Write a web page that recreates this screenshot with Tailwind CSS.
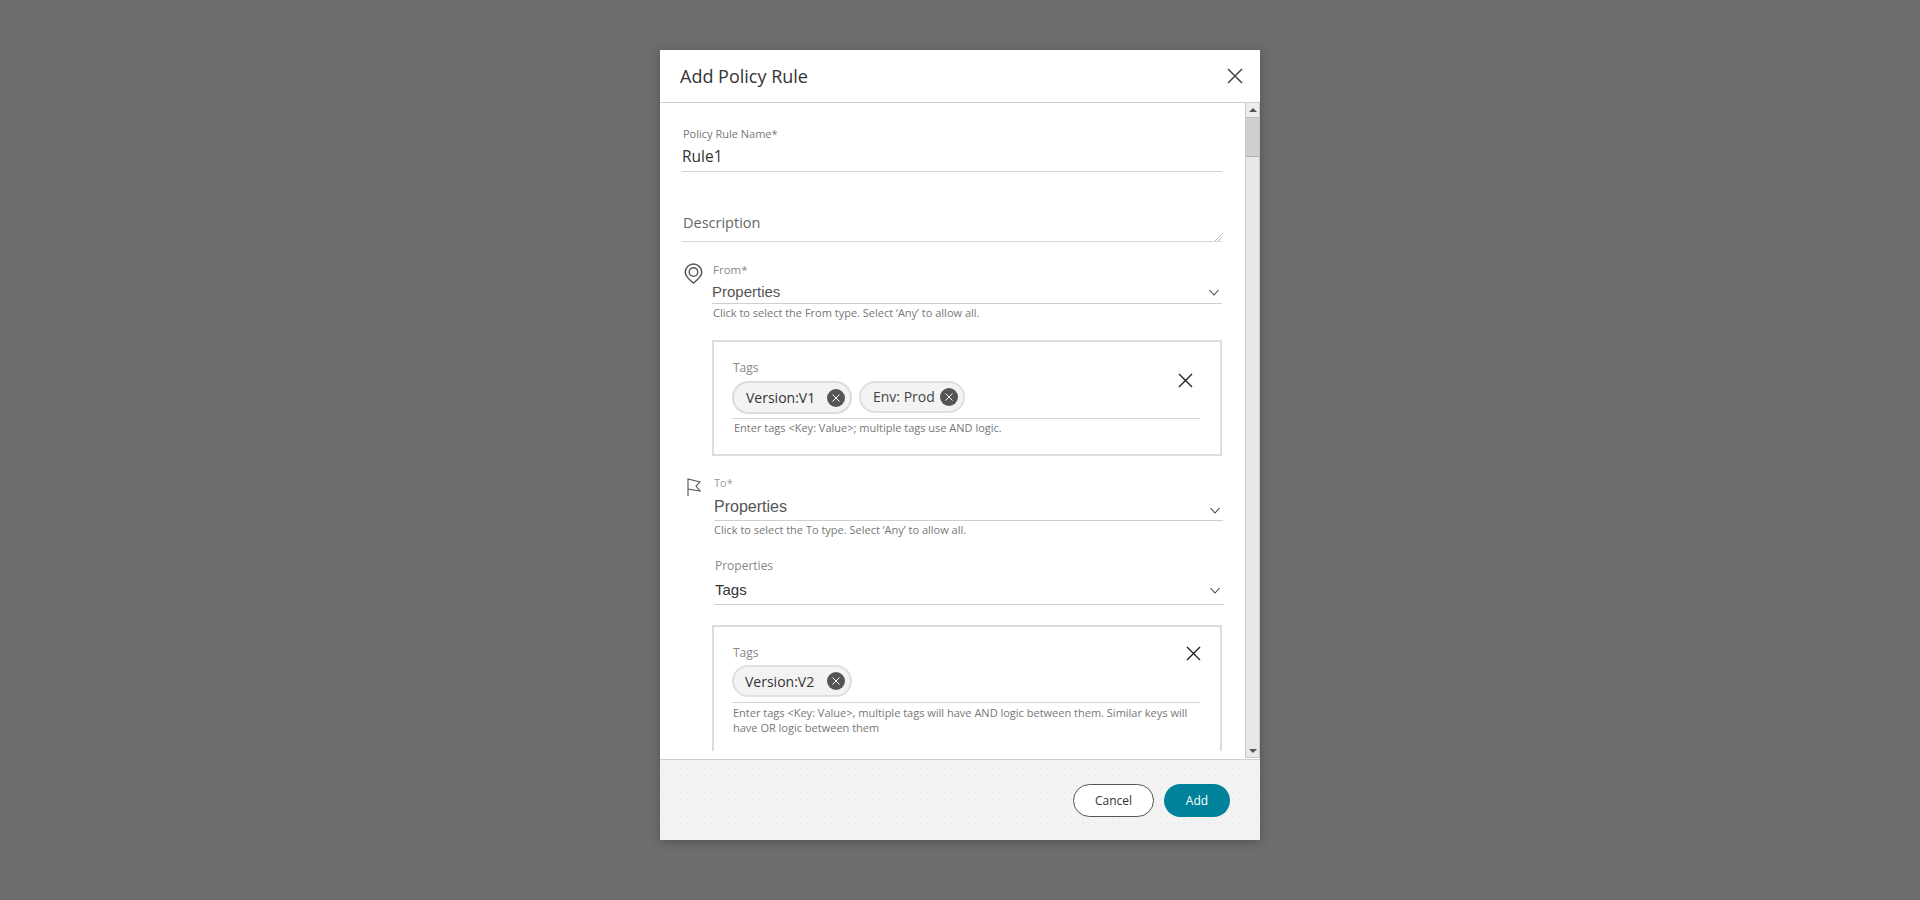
<!DOCTYPE html>
<html lang="en">
<head>
  <meta charset="UTF-8" />
  <title>Add Policy Rule</title>
  <script src="https://cdn.jsdelivr.net/npm/@tailwindcss/browser@4"></script>
</head>
<body class="bg-[#6d6d6d] h-[900px] overflow-hidden font-['Open_Sans',sans-serif]">
  <div class="flex justify-center pt-[50px]">
    <div class="w-[600px] h-[790px] flex flex-col bg-white shadow-[0_2px_10px_rgba(0,0,0,0.25)]">

      <!-- header -->
      <div class="h-[53px] shrink-0 flex items-center justify-between pl-[20px] pr-[17px] border-b border-[#cfcfcf]">
        <h1 class="text-[18px] leading-6 text-[#333]">Add Policy Rule</h1>
        <svg class="w-4 h-4 text-[#444]" viewBox="0 0 16 16" fill="none" stroke="currentColor" stroke-width="1.5"><path d="M1 1l14 14M15 1L1 15"/></svg>
      </div>

      <div class="flex h-[656px] shrink-0">
        <!-- form -->
        <div class="w-[585px] h-[648px] overflow-hidden pl-[22px]">
          <div class="w-[540px] pt-[23px]">
            <div class="pl-[1px] text-[11px] leading-4 text-[#777]">Policy Rule Name*</div>
            <div class="mt-[4px] h-[26px] border-b border-[#d0d0d0] text-[15.5px] leading-5 text-[#333]">Rule1</div>

            <div class="relative mt-[41px] h-[29px] pl-[1px] border-b border-[#d8d8d8] text-[14.5px] leading-5 text-[#666]">
              Description
              <svg class="absolute right-0 bottom-0 w-2 h-2 text-[#bbb]" viewBox="0 0 8 8" fill="none" stroke="currentColor"><path d="M1 8l7-7M4 8l4-4"/></svg>
            </div>

            <!-- from -->
            <div class="flex mt-[20px]">
              <div class="w-[30px] shrink-0 pl-[2px] pt-[1px]">
                <svg class="w-[19px] h-[21px] text-[#555]" viewBox="0 0 20 22" fill="none" stroke="currentColor" stroke-width="1.5"><path d="M10 1a8.700 8.700 0 0 0-8.700 8.700c0 4.700 5 8.400 8.700 11.400 3.700-3 8.700-6.700 8.700-11.400A8.700 8.700 0 0 0 10 1z"/><circle cx="10" cy="9.500" r="4.500"/></svg>
              </div>
              <div class="w-[510px]">
                <div class="pl-[1px] text-[11.5px] leading-4 text-[#888]">From*</div>
                <div class="mt-[4px] h-[22px] flex justify-between border-b border-[#cfcfcf] pr-[3px] font-['Liberation_Sans',sans-serif] text-[15px] leading-5 text-[#555]">
                  Properties
                  <svg class="w-[10px] h-[20px] text-[#444]" viewBox="0 0 10 20" fill="none" stroke="currentColor" stroke-width="1.100"><path d="M0.500 8l4.500 5 4.500-5"/></svg>
                </div>
                <div class="mt-[1px] pl-[1px] text-[11px] leading-4 text-[#777]">Click to select the From type. Select ‘Any’ to allow all.</div>

                <div class="relative mt-[19px] h-[116px] border-2 border-[#dcdcdc] pt-[18px] pl-[18px] pr-[20px]">
                  <div class="pl-[1px] text-[12px] leading-4 text-[#888]">Tags</div>
                  <div class="mt-[5px] h-[38px] flex items-start gap-[7px] border-b border-[#d5d5d5]">
                    <div class="w-[120px] h-[33px] flex items-center justify-between rounded-full border-2 border-[#dcdcdc] bg-[#f3f3f3] pl-[12px] pr-[5px] text-[14px] text-[#333]">
                      Version:V1
                      <svg class="w-[18px] h-[18px]" viewBox="0 0 18 18"><circle cx="9" cy="9" r="9" fill="#555"/><path d="M5.500 5.500l7 7M12.500 5.500l-7 7" stroke="#fff" stroke-width="1"/></svg>
                    </div>
                    <div class="w-[106px] h-[32px] flex items-center justify-between rounded-full border-2 border-[#e0e0e0] bg-[#f3f3f3] pl-[12px] pr-[5px] text-[14px] text-[#444]">
                      <span class="-mt-[1px]">Env: Prod</span>
                      <svg class="w-[18px] h-[18px]" viewBox="0 0 18 18"><circle cx="9" cy="9" r="9" fill="#555"/><path d="M5.500 5.500l7 7M12.500 5.500l-7 7" stroke="#fff" stroke-width="1"/></svg>
                    </div>
                  </div>
                  <div class="mt-[1px] pl-[2px] text-[11px] leading-4 text-[#777]">Enter tags &lt;Key: Value&gt;; multiple tags use AND logic.</div>
                  <svg class="absolute left-[464px] top-[31px] w-[15px] h-[15px] text-[#222]" viewBox="0 0 15 15" fill="none" stroke="currentColor" stroke-width="1.400"><path d="M1 1l13 13M14 1L1 14"/></svg>
                </div>
              </div>
            </div>

            <!-- to -->
            <div class="flex mt-[19px]">
              <div class="w-[32px] shrink-0 pl-[5px] pt-[3px]">
                <svg class="w-[14px] h-[18px] text-[#555]" viewBox="0 0 14 18" fill="none" stroke="currentColor" stroke-width="1.100"><path d="M1 18V1l12 3-4 4 4 5-12-2"/></svg>
              </div>
              <div class="w-[509px] shrink-0">
                <div class="text-[11px] leading-4 text-[#999]">To*</div>
                <div class="mt-[4px] h-[26px] flex justify-between border-b border-[#cfcfcf] pr-[3px] pt-[1px] font-['Liberation_Sans',sans-serif] text-[16px] leading-[22px] text-[#555]">
                  Properties
                  <svg class="w-[10px] h-[24px] text-[#444]" viewBox="0 0 10 24" fill="none" stroke="currentColor" stroke-width="1.100"><path d="M0.500 12l4.500 5 4.500-5"/></svg>
                </div>
                <div class="mt-[1px] text-[11px] leading-4 text-[#777]">Click to select the To type. Select ‘Any’ to allow all.</div>

                <div class="mt-[20px] ml-[1px] text-[12px] leading-4 text-[#888]">Properties</div>
                <div class="mt-[5px] h-[26px] w-[510px] flex justify-between border-b border-[#cfcfcf] pl-[1px] pr-[4px] font-['Liberation_Sans',sans-serif] text-[15px] leading-[22px] text-[#333]">
                  Tags
                  <svg class="w-[10px] h-[22px] text-[#444]" viewBox="0 0 10 22" fill="none" stroke="currentColor" stroke-width="1.100"><path d="M0.500 9l4.500 5 4.500-5"/></svg>
                </div>

                <div class="relative mt-[20px] -ml-[2px] w-[510px] h-[160px] border-2 border-[#dcdcdc] pt-[18px] pl-[18px] pr-[20px]">
                  <div class="pl-[1px] text-[12px] leading-4 text-[#888]">Tags</div>
                  <div class="mt-[4px] h-[38px] flex items-start border-b border-[#d5d5d5]">
                    <div class="w-[120px] h-[32px] flex items-center justify-between rounded-full border-2 border-[#e0e0e0] bg-[#f3f3f3] pl-[11px] pr-[5px] text-[14px] text-[#333]">
                      Version:V2
                      <svg class="w-[18px] h-[18px]" viewBox="0 0 18 18"><circle cx="9" cy="9" r="9" fill="#555"/><path d="M5.500 5.500l7 7M12.500 5.500l-7 7" stroke="#fff" stroke-width="1"/></svg>
                    </div>
                  </div>
                  <div class="mt-[2px] pl-[1px] w-[460px] text-[11px] leading-[15px] text-[#777]">Enter tags &lt;Key: Value&gt;, multiple tags will have AND logic between them. Similar keys will have OR logic between them</div>
                  <svg class="absolute left-[472px] top-[19px] w-[15px] h-[15px] text-[#222]" viewBox="0 0 15 15" fill="none" stroke="currentColor" stroke-width="1.400"><path d="M1 1l13 13M14 1L1 14"/></svg>
                </div>
              </div>
            </div>
          </div>
        </div>

        <!-- scrollbar -->
        <div class="w-[15px] h-[655px] flex flex-col bg-[#e8e8e8] border border-t-0 border-[#c8c8c8]">
          <div class="h-[15px] shrink-0 flex items-center justify-center bg-[#ececec] border-b border-[#bdbdbd]">
            <div class="w-0 h-0 border-x-[4px] border-x-transparent border-b-[4px] border-b-[#555]"></div>
          </div>
          <div class="h-[39px] shrink-0 bg-[#cfcfcf] border-b border-[#b0b0b0]"></div>
          <div class="flex-1"></div>
          <div class="h-[13px] shrink-0 flex items-center justify-center">
            <div class="w-0 h-0 border-x-[4px] border-x-transparent border-t-[4px] border-t-[#555]"></div>
          </div>
        </div>
      </div>

      <!-- footer -->
      <div class="flex-1 flex items-center justify-end gap-[10px] pr-[30px] pt-[1px] border-t border-[#cfcfcf] bg-[#f3f3f3] bg-[radial-gradient(#eeeeee_1px,transparent_1px)] bg-[length:6px_6px]">
        <button class="w-[81px] h-[33px] rounded-full border border-[#555] bg-white text-[12px] text-[#333]">Cancel</button>
        <button class="w-[66px] h-[33px] rounded-full bg-[#00829b] text-[12px] text-white">Add</button>
      </div>
    </div>
  </div>
</body>
</html>
